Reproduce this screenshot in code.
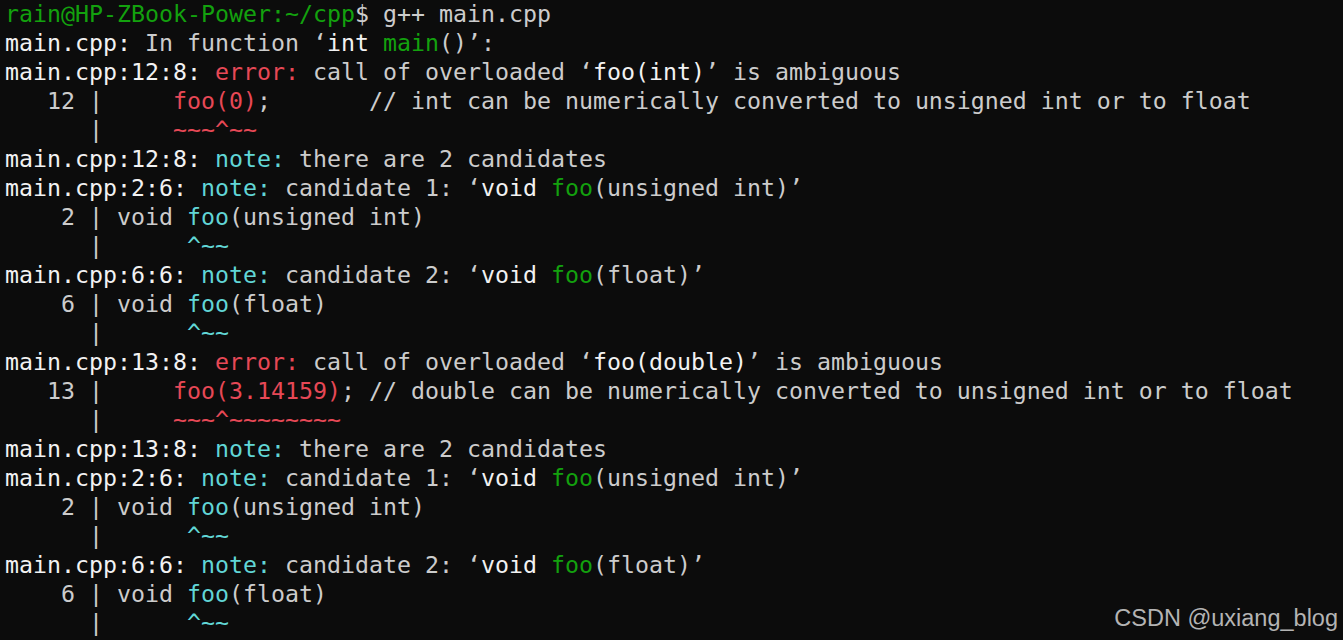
import React from "react"

// terminal palette (Campbell-ish)
const W = "text-[#cccccc]"
const B = "text-[#f2f2f2]"
const G = "text-[#13a10e]"
const R = "text-[#e74856]"
const C = "text-[#61d6d6]"

const note1 = (loc, n, sig) => [
  [B, loc],
  [C, "note: "],
  [W, `candidate ${n}: ‘`],
  [B, "void "],
  [G, "foo"],
  [W, `(${sig})’`],
]

const lines = [
  [[G, "rain@HP-ZBook-Power:~/cpp"], [W, "$ g++ main.cpp"]],
  [[B, "main.cpp:"], [W, " In function ‘"], [B, "int "], [G, "main"], [W, "()’:"]],
  [[B, "main.cpp:12:8: "], [R, "error: "], [W, "call of overloaded ‘"], [B, "foo(int)"], [W, "’ is ambiguous"]],
  [[W, "   12 |     "], [R, "foo(0)"], [W, ";       // int can be numerically converted to unsigned int or to float"]],
  [[W, "      |     "], [R, "~~~^~~"]],
  [[B, "main.cpp:12:8: "], [C, "note: "], [W, "there are 2 candidates"]],
  note1("main.cpp:2:6: ", 1, "unsigned int"),
  [[W, "    2 | void "], [C, "foo"], [W, "(unsigned int)"]],
  [[W, "      |      "], [C, "^~~"]],
  note1("main.cpp:6:6: ", 2, "float"),
  [[W, "    6 | void "], [C, "foo"], [W, "(float)"]],
  [[W, "      |      "], [C, "^~~"]],
  [[B, "main.cpp:13:8: "], [R, "error: "], [W, "call of overloaded ‘"], [B, "foo(double)"], [W, "’ is ambiguous"]],
  [[W, "   13 |     "], [R, "foo(3.14159)"], [W, "; // double can be numerically converted to unsigned int or to float"]],
  [[W, "      |     "], [R, "~~~^~~~~~~~~"]],
  [[B, "main.cpp:13:8: "], [C, "note: "], [W, "there are 2 candidates"]],
  note1("main.cpp:2:6: ", 1, "unsigned int"),
  [[W, "    2 | void "], [C, "foo"], [W, "(unsigned int)"]],
  [[W, "      |      "], [C, "^~~"]],
  note1("main.cpp:6:6: ", 2, "float"),
  [[W, "    6 | void "], [C, "foo"], [W, "(float)"]],
  [[W, "      |      "], [C, "^~~"]],
]

export default function App() {
  return (
    <div className="relative w-[1343px] h-[640px] overflow-hidden bg-[#0c0c0c]">
      <div className="pl-[5px] -mt-[1px] font-['DejaVu_Sans_Mono',monospace] text-[23.25px] leading-[29px] whitespace-pre">
        {lines.map((segs, i) => (
          <div key={i} className="h-[29px]">
            {segs.map(([cls, txt], j) => (
              <span key={j} className={cls}>{txt}</span>
            ))}
          </div>
        ))}
      </div>

      {/* watermark */}
      <div className="absolute right-[5px] bottom-[10px] font-['Liberation_Sans',sans-serif] text-[23.5px] leading-none text-[#b4b4b4]">
        CSDN @uxiang_blog
      </div>
    </div>
  )
}
